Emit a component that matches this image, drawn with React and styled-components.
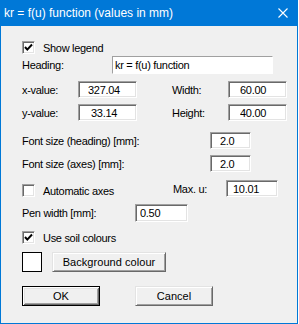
import React from 'react';
import styled, { createGlobalStyle } from 'styled-components';

const GlobalStyle = createGlobalStyle`
  html, body {
    margin: 0;
    padding: 0;
    background: #ffffff;
  }
  body {
    font-family: "Liberation Sans", Arial, sans-serif;
  }
`;

const Window = styled.div`
  width: 298px;
  height: 324px;
  box-sizing: border-box;
  border: 1px solid #0078d7;
  border-top: 0;
  background: #f0f0f0;
  display: flex;
  flex-direction: column;
`;

const TitleBar = styled.div`
  flex: none;
  height: 26px;
  background: #0078d7;
  color: #ffffff;
  font-size: 12px;
  display: flex;
  align-items: center;
  justify-content: space-between;
  padding: 0 9px 0 3px;
`;

const Body = styled.div`
  padding-left: 21px;
  font-size: 11px;
  letter-spacing: -0.3px;
  color: #000000;
`;

const Row = styled.div`
  display: flex;
  align-items: center;
  height: ${p => p.$h}px;
  margin-top: ${p => p.$mt}px;
`;

const Label = styled.span`
  flex: none;
  width: ${p => p.$w}px;
  margin-left: ${p => p.$ml || 0}px;
  white-space: nowrap;
`;

const Field = styled.input`
  flex: none;
  box-sizing: border-box;
  width: ${p => p.$w}px;
  height: 100%;
  margin: 0;
  padding: 0 0 0 ${p => p.$pl}px;
  font: inherit;
  letter-spacing: inherit;
  color: #000;
  background: #ffffff;
  border: 1px solid;
  border-color: #a0a0a0 #ffffff #ffffff #a0a0a0;
  box-shadow: ${p => (p.$thin ? 'none' : 'inset 1px 1px #696969, inset -1px -1px #e3e3e3')};
  outline: none;
`;

const CheckGroup = styled.label`
  flex: none;
  display: flex;
  align-items: center;
  gap: 8px;
  width: ${p => (p.$w ? `${p.$w}px` : 'auto')};
  align-self: ${p => (p.$end ? 'flex-end' : 'center')};
`;

const Box = styled.span`
  box-sizing: border-box;
  width: 13px;
  height: 13px;
  background: #ffffff;
  border: 1px solid;
  border-color: #a0a0a0 #ffffff #ffffff #a0a0a0;
  box-shadow: inset 1px 1px #696969, inset -1px -1px #e3e3e3;
  display: flex;
  align-items: center;
  justify-content: center;
`;

const Swatch = styled.span`
  box-sizing: border-box;
  width: 20px;
  height: 20px;
  background: #ffffff;
  border: 1px solid #000000;
  margin-right: 10px;
`;

const Button = styled.button`
  flex: none;
  box-sizing: border-box;
  width: ${p => p.$w}px;
  height: 100%;
  margin: 0 0 0 ${p => p.$ml || 0}px;
  padding: 0;
  font: inherit;
  letter-spacing: 0.05px;
  color: #000;
  background: #f0f0f0;
  border: 1px solid;
  border-color: ${p => (p.$default ? '#000000' : '#e3e3e3 #696969 #696969 #e3e3e3')};
  box-shadow: ${p =>
    p.$default
      ? 'inset 1px 1px #ffffff, inset -1px -1px #696969, inset 2px 2px #e3e3e3, inset -2px -2px #a0a0a0'
      : 'inset 1px 1px #ffffff, inset -1px -1px #a0a0a0'};
`;

function Check({ checked, label, w, end }) {
  return (
    <CheckGroup $w={w} $end={end}>
      <Box>
        {checked && (
          <svg width="9" height="9" viewBox="0 0 9 9">
            <polyline points="1,4 3.3,6.6 8,1.5" fill="none" stroke="#000" strokeWidth="2" />
          </svg>
        )}
      </Box>
      <span>{label}</span>
    </CheckGroup>
  );
}

export default function App() {
  return (
    <>
      <GlobalStyle />
      <Window>
        <TitleBar>
          <span>kr = f(u) function (values in mm)</span>
          <svg width="10" height="10" viewBox="0 0 10 10">
            <path d="M0.5 0.5 L9.5 9.5 M9.5 0.5 L0.5 9.5" stroke="#fff" strokeWidth="1.1" />
          </svg>
        </TitleBar>
        <Body>
          <Row $h={13} $mt={15}>
            <Check checked label="Show legend" />
          </Row>
          <Row $h={18} $mt={2}>
            <Label $w={90}>Heading:</Label>
            <Field $w={161} $pl={2} $thin defaultValue="kr = f(u) function" />
          </Row>
          <Row $h={17} $mt={7}>
            <Label $w={56}>x-value:</Label>
            <Field $w={59} $pl={9} defaultValue="327.04" />
            <Label $w={56} $ml={35}>Width:</Label>
            <Field $w={59} $pl={11} defaultValue="60.00" />
          </Row>
          <Row $h={17} $mt={6}>
            <Label $w={56}>y-value:</Label>
            <Field $w={59} $pl={12} defaultValue="33.14" />
            <Label $w={56} $ml={35}>Height:</Label>
            <Field $w={59} $pl={11} defaultValue="40.00" />
          </Row>
          <Row $h={17} $mt={11}>
            <Label $w={188}>Font size (heading) [mm]:</Label>
            <Field $w={41} $pl={9} defaultValue="2.0" />
          </Row>
          <Row $h={17} $mt={6}>
            <Label $w={188}>Font size (axes) [mm]:</Label>
            <Field $w={41} $pl={9} defaultValue="2.0" />
          </Row>
          <Row $h={17} $mt={8}>
            <Check label="Automatic axes" w={151} end />
            <Label $w={53}>Max. u:</Label>
            <Field $w={52} $pl={6} defaultValue="10.01" />
          </Row>
          <Row $h={18} $mt={7}>
            <Label $w={113}>Pen width [mm]:</Label>
            <Field $w={53} $pl={4} defaultValue="0.50" />
          </Row>
          <Row $h={13} $mt={9}>
            <Check checked label="Use soil colours" />
          </Row>
          <Row $h={20} $mt={8}>
            <Swatch />
            <Button $w={114}>Background colour</Button>
          </Row>
          <Row $h={20} $mt={14}>
            <Button $w={78} $default>OK</Button>
            <Button $w={78} $ml={35}>Cancel</Button>
          </Row>
        </Body>
      </Window>
    </>
  );
}
